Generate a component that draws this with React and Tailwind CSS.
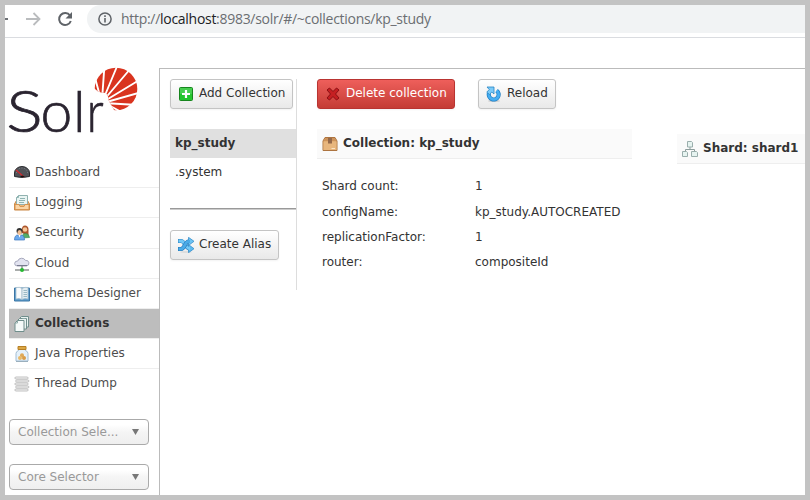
const S = "block shrink-0";

function Svg({ children, className = "" }) {
  return (
    <svg width="16" height="16" viewBox="0 0 16 16" className={`${S} ${className}`}>
      {children}
    </svg>
  );
}

const Dashboard = () => (
  <Svg>
    <path d="M.5 12.500V9a7.500 6.500 0 0 1 15 0v3.500q-7.500 2-15 0z" fill="#505257" stroke="#2c2d31" />
    <path d="M2.500 9a5.500 5 0 0 1 11 0" fill="none" stroke="#85878c" strokeDasharray="1 1.500" />
    <path d="M2 6l8 7" stroke="#d3282c" strokeWidth="1.200" />
    <path d="M6 13q2-3 5 0z" fill="#111" />
  </Svg>
);
const Logging = () => (
  <Svg>
    <path d="M.5 9l2-3.500h11l2 3.500v6H.5z" fill="#efb77b" stroke="#c98643" />
    <path d="M4.500.5h9v9h-11v-7z" fill="#eaf5f3" stroke="#91b2b0" />
    <path d="M2.500 2.500h2v-2M6 3.500h5M5 5.500h6M5 7.500h5" fill="none" stroke="#8fb4b3" />
    <path d="M1 9.500h4l1 2h4l1-2h4v5H1z" fill="#fbd5a5" stroke="#d79552" />
  </Svg>
);
const Security = () => (
  <Svg>
    <path d="M8 8V4q0-3.500 3-3.500T14.500 4v6H12z" fill="#ad562c" />
    <circle cx="11" cy="4.500" r="2.300" fill="#f6c697" />
    <path d="M8 13q0-4.500 3.500-4.500T15.500 12.500z" fill="#55ad68" stroke="#368b49" strokeWidth=".6" />
    <circle cx="5.500" cy="6" r="3" fill="#333" />
    <ellipse cx="5.600" cy="7.500" rx="2.100" ry="2.500" fill="#f1be92" />
    <path d="M.5 15q0-5 3.500-5l1.500 2L7 10q3.500 0 3.500 5z" fill="#6ba9ed" stroke="#3976bd" strokeWidth=".7" />
    <path d="M4.500 10.500l1 2 1-2z" fill="#fff" />
  </Svg>
);
const Cloud = () => (
  <Svg>
    <path d="M3.500 10a3 2.500 0 0 1 .3-5 4 3.500 0 0 1 7.600-.6 3 2.800 0 0 1 1 5.600z" fill="#e2e3f0" stroke="#a7a9bd" />
    <path d="M3 9.500h10" stroke="#777a8e" />
    <path d="M8 10v3M1 14h14" stroke="#8d9290" strokeWidth="1.500" />
    <circle cx="8" cy="14" r="2" fill="#25b931" />
  </Svg>
);
const Book = () => (
  <Svg>
    <path d="M.5 2h15v13H.5z" fill="#5c9ccc" stroke="#3b76a5" />
    <path d="M2 1.500q4-.8 6 1v11q-3-1.500-6-.5z" fill="#f9fbfc" stroke="#9fb9c9" strokeWidth=".7" />
    <path d="M8 2.500q3-1.800 6-1V13q-3.500-1-6 .5z" fill="#e3edf2" stroke="#9fb9c9" strokeWidth=".7" />
    <path d="M9.500 4.500h3.500M9.500 6.500h3.500M9.500 8.500h3.500M9.500 10.500h3.500" stroke="#9bb9c4" />
  </Svg>
);
const Documents = () => (
  <Svg>
    <path d="M7.500.5h7V11H5.500V2.500z" fill="#eaf3f1" stroke="#708e8c" />
    <path d="M5.500 2.500h7V13H3.500V4.500z" fill="#eaf3f1" stroke="#708e8c" />
    <path d="M3.500 4.500h6.500v11H1V7z" fill="#f5faf9" stroke="#708e8c" />
    <path d="M1 7h2.500V4.500M8.500 2.500h3" fill="none" stroke="#8faaa8" />
  </Svg>
);
const Jar = () => (
  <Svg>
    <path d="M4.500 3h7v1.500q2.500 1 2.500 3V15H2V7.500q0-2 2.500-3z" fill="#e5f1fa" stroke="#a2bdd4" />
    <path d="M4 .5h8v3H4z" fill="#dba744" stroke="#b67f25" />
    <circle cx="8" cy="9.300" r="2" fill="#dfa957" />
    <circle cx="6" cy="12" r="2" fill="#e8b968" />
    <circle cx="10" cy="12" r="2" fill="#d99c47" />
    <path d="M2 15.500h12" stroke="#9aafbd" />
  </Svg>
);
const Threads = () => (
  <Svg>
    {[1, 4, 7, 10, 13].map((y, i) => (
      <g key={y} transform={`translate(${i % 2 ? 0.8 : 0} ${y})`}>
        <path d="M1.500 0h12l.8 1-.8 1h-12l-.8-1z" fill="#f6f6f6" stroke="#a8a8a8" strokeWidth=".7" />
      </g>
    ))}
  </Svg>
);
const Plus = () => (
  <Svg>
    <rect x="1.500" y="1.500" width="13" height="13" rx="1" fill="#25c52f" stroke="#16851d" />
    <path d="M2 8h12V2H2z" fill="#fff" opacity=".15" />
    <path d="M8 4v8M4 8h8" stroke="#fff" strokeWidth="2.200" />
  </Svg>
);
const Cross = () => (
  <Svg>
    <path d="M2 4l2.500-2L8 5.500 11.500 2 14 4l-3.500 4 3.500 4-2.500 2L8 10.500 4.500 14 2 12l3.500-4z" fill="#c51f22" stroke="#8b0f13" />
  </Svg>
);
const Reload = () => (
  <Svg>
    <ellipse cx="8" cy="15" rx="6" ry="1" fill="#cfcfcf" />
    <path d="M10.600 4.600a4.900 4.900 0 1 1-7.600 2.600" fill="none" stroke="#1f7fc4" strokeWidth="4.200" />
    <path d="M10.600 4.600a4.900 4.900 0 1 1-7.600 2.600" fill="none" stroke="#45aef2" strokeWidth="2.800" />
    <path d="M1 1h7v7L5.800 6 3.500 8.500.8 6.200 3.200 3.500z" fill="#7ccbf8" stroke="#2a85c4" strokeWidth=".8" />
  </Svg>
);
const Shuffle = () => (
  <Svg>
    <ellipse cx="8" cy="15" rx="6" ry="1" fill="#ddd" />
    <path d="M0 4h3q2 0 4 3.500T11 11.500h1" fill="none" stroke="#2b86c6" strokeWidth="4" />
    <path d="M10.500 7.500l5.500 4.200-5.500 4z" fill="#5dbaf0" stroke="#2b86c6" strokeWidth=".7" />
    <path d="M.5 4H3q2 0 4 3.500T11 11.500h1" fill="none" stroke="#73c8f6" strokeWidth="2.800" />
    <path d="M0 12h3q2 0 4-4t4-3.500h1" fill="none" stroke="#2276b8" strokeWidth="4" />
    <path d="M10.500.3l5.500 4-5.500 4.200z" fill="#6cc3f3" stroke="#2b86c6" strokeWidth=".7" />
    <path d="M.5 12H3q2 0 4-4t4-3.500h1" fill="none" stroke="#4aabe8" strokeWidth="2.800" />
  </Svg>
);
const Box = () => (
  <Svg>
    <path d="M1 5l2-3.500h10L15 5v9.500H1z" fill="#dca66c" stroke="#ad7440" />
    <path d="M1.500 5.500h13v8.500h-13z" fill="#e8b67d" />
    <path d="M1.500 5L3.500 2h9l2 3z" fill="#cd935a" />
    <path d="M6 2h4v6L9 7 8 8 7 7 6 8z" fill="#95694a" />
    <path d="M9.500 12.500h3.500" stroke="#fbe5c7" />
  </Svg>
);
const Nodes = () => (
  <Svg>
    <path d="M8 6v2.500M3.500 10.500v-2h9v2" fill="none" stroke="#8c9d9c" />
    <path d="M5.500.5h4l1 1v4.500h-5zM.5 10.500h4l1 1v4h-5zM9.500 10.500h5l1 1v4h-6z" fill="#e6f3f0" stroke="#9aaeac" />
  </Svg>
);

function Logo() {
  return (
    <svg width="132" height="72" viewBox="8 66 132 72" className="block overflow-visible">
      <g fontFamily="Lato" fontWeight="300" fontSize="57" fill="#2a2430" stroke="#2a2430" strokeWidth=".7">
        <text transform="translate(6.200 132) scale(1.200 1)">S</text>
        <text x="40.500" y="132">o</text>
        <text x="73" y="132">l</text>
        <text transform="translate(86.800 132) scale(.84 1)">r</text>
      </g>
      <clipPath id="fan">
        <path d="M90 60h52v54h-26L113 108 110.500 104 108.500 100 108 96.500 106 93 101 92.500 98 91.500 95 89 90 84z" />
      </clipPath>
      <g clipPath="url(#fan)">
        <circle cx="116" cy="89" r="21.300" fill="#d9341f" />
        <path
          d="M101 100L94 74M102 100L104.500 65M103 100L118 64M103 101L131 68M103 102L141 79M103 103L142 92M103 103L138 105M103 102L125 114"
          stroke="#fff"
          strokeWidth="1.900"
        />
      </g>
    </svg>
  );
}

const menu = [
  ["Dashboard", Dashboard, "h-[31px]"],
  ["Logging", Logging, "h-[30px]"],
  ["Security", Security, "h-[31px]"],
  ["Cloud", Cloud, "h-[30px]"],
  ["Schema Designer", Book, "h-[30px]"],
  ["Collections", Documents, "h-[30px]"],
  ["Java Properties", Jar, "h-[30px]"],
  ["Thread Dump", Threads, "h-[30px]"],
];

function Selector({ children, className = "" }) {
  return (
    <div className={`flex h-[26px] w-[140px] items-center justify-between rounded border border-[#aaa] bg-linear-to-b from-white from-20% via-[#f5f5f5] via-50% to-[#efefef] pr-[9px] pl-2 text-[#999] ${className}`}>
      <span>{children}</span>
      <svg width="7" height="6" viewBox="0 0 7 6">
        <path d="M0 0h7L3.500 6z" fill="#777" />
      </svg>
    </div>
  );
}

function Button({ icon: Icon, children, className }) {
  return (
    <button className={`flex h-[30px] shrink-0 items-center rounded-[3px] border bg-linear-to-b pl-[7px] shadow-xs ${className}`}>
      <Icon />
      <span className="-mt-[2px] ml-[5px] whitespace-nowrap">{children}</span>
    </button>
  );
}

const light = "border-[#c4c4c4] from-white to-[#e9e9e9] text-[#333]";

const details = [
  ["Shard count:", "1", "h-[26px]"],
  ["configName:", "kp_study.AUTOCREATED", "h-[25px]"],
  ["replicationFactor:", "1", "h-[25px]"],
  ["router:", "compositeId", "h-[25px]"],
];

export default function App() {
  return (
    <div className="flex h-[500px] w-[810px] flex-col overflow-hidden border-[5px] border-[#c3c3c3] bg-white font-['DejaVu_Sans',sans-serif] text-[12px] leading-4 text-[#333]">
      <header className="flex h-[33px] shrink-0 border-b border-[#dadce0]">
        <svg width="82" height="28" viewBox="5 5 82 28" className="shrink-0" fill="none">
          <path d="M5 19h3" stroke="#5f6368" strokeWidth="1.800" />
          <path d="M26 19h13M33.500 13l6 6-6 6" stroke="#babcbe" strokeWidth="1.800" />
          <path d="M70 15.500a6 6 0 1 0 .8 5.500" stroke="#5f6368" strokeWidth="2" />
          <path d="M72 12v6.500h-6.500z" fill="#5f6368" />
        </svg>
        <div className="flex h-7 flex-1 items-center rounded-l-full bg-[#f1f3f4] pl-[11px]">
          <svg width="14" height="14" viewBox="0 0 14 14" className="shrink-0">
            <circle cx="7" cy="7" r="6.100" fill="none" stroke="#5f6368" strokeWidth="1.500" />
            <path d="M7 6v4.500M7 3.300v1.700" stroke="#5f6368" strokeWidth="1.600" />
          </svg>
          <span className="ml-[9px] font-['Open_Sans','Noto_Sans',sans-serif] text-[14px] tracking-[-0.29px] whitespace-nowrap text-[#6b6e72]">
            http://<span className="text-[#202124]">localhost</span>:8983/solr/#/~collections/kp_study
          </span>
        </div>
      </header>
      <div className="flex min-h-0 flex-1">
        <aside className="w-[154px] shrink-0 pt-7 pl-1">
          <div className="-ml-px h-[91px]">
            <Logo />
          </div>
          <nav>
            {menu.map(([label, Icon, height]) => (
              <div
                key={label}
                className={`flex items-center border-b pl-[5px] ${height} ${
                  label === "Collections" ? "border-[#eee] bg-[#bdbdbd] font-bold text-[#333]" : label === "Thread Dump" ? "border-white text-[#4d4d4d]" : "border-[#eee] text-[#4d4d4d]"
                }`}
              >
                <Icon />
                <span className={`ml-[5px] whitespace-nowrap ${label === "Dashboard" ? "-mt-px" : "-mt-[2px]"}`}>{label}</span>
              </div>
            ))}
          </nav>
          <Selector className="mt-5">Collection Sele...</Selector>
          <Selector className="mt-[19px]">Core Selector</Selector>
        </aside>
        <main className="mt-[30px] flex min-w-0 flex-1 border-t border-l border-[#bbb] pt-[10px] pl-[10px]">
          <section className="h-[211px] w-[127px] shrink-0 border-r border-[#ddd]">
            <Button icon={Plus} className={`w-[123px] ${light}`}>Add Collection</Button>
            <div className="mt-5 h-[29px] bg-[#e0e0e0] pt-[6px] pl-[5px] font-bold">kp_study</div>
            <div className="pt-[6px] pl-[5px]">.system</div>
            <div className="mt-7 h-[2px] border-t border-b border-t-[#999] border-b-[#ccc]" />
            <Button icon={Shuffle} className={`mt-5 w-[109px] ${light}`}>Create Alias</Button>
          </section>
          <section className="ml-5 w-[315px] shrink-0">
            <div className="flex gap-[23px]">
              <Button icon={Cross} className="w-[138px] border-[#b93431] from-[#ee5f5b] to-[#c43c35] text-white">Delete collection</Button>
              <Button icon={Reload} className={`w-[78px] ${light}`}>Reload</Button>
            </div>
            <h2 className="mt-5 flex h-[30px] items-center border-b border-[#eee] bg-[#fafafa] pl-[5px] font-bold">
              <Box />
              <span className="-mt-[2px] ml-[5px]">Collection: kp_study</span>
            </h2>
            <dl className="pt-[19px] pl-[5px]">
              {details.map(([k, v, h]) => (
                <div key={k} className={`flex ${h}`}>
                  <dt className="w-[153px]">{k}</dt>
                  <dd>{v}</dd>
                </div>
              ))}
            </dl>
          </section>
          <section className="ml-[45px] min-w-0 flex-1 pt-[55px]">
            <h2 className="flex h-[30px] items-center border-b border-[#eee] bg-[#fafafa] pl-[5px] font-bold whitespace-nowrap">
              <Nodes />
              <span className="-mt-[2px] ml-[5px]">Shard: shard1</span>
            </h2>
          </section>
        </main>
      </div>
    </div>
  );
}
